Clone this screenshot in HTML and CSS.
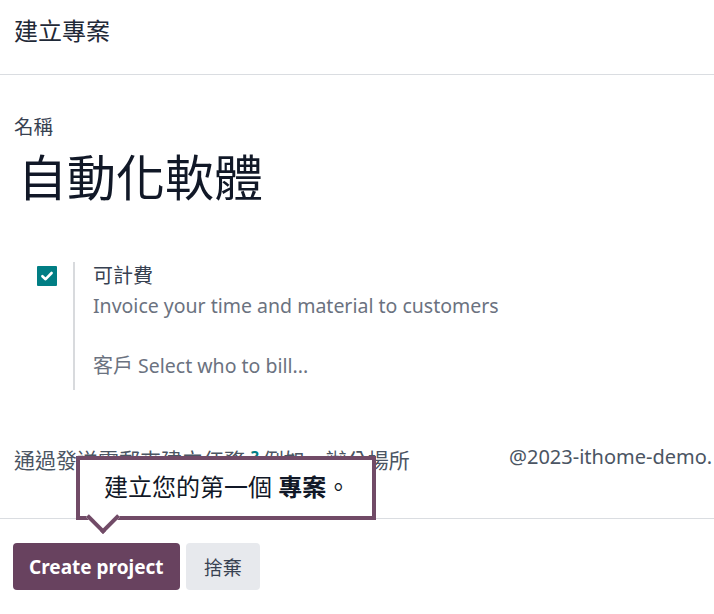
FILE: index.html
```html
<!DOCTYPE html>
<html lang="zh-Hant">
<head>
<meta charset="utf-8">
<title>建立專案</title>
<link rel="stylesheet" href="styles.css">
</head>
<body>
<div class="dialog">
  <header class="dlg-header">
    <h4 class="dlg-title">建立專案</h4>
  </header>
  <main class="dlg-body">
    <label class="name-label">名稱</label>
    <h1 class="name-value">自動化軟體</h1>

    <div class="billable">
      <div class="check-col">
        <span class="checkbox">
          <svg viewBox="0 0 20 20" width="20" height="20" aria-hidden="true"><path d="M5.4 10.2 L8.6 13.2 L14.6 7" fill="none" stroke="#fff" stroke-width="2.6" stroke-linecap="round" stroke-linejoin="round"/></svg>
        </span>
      </div>
      <div class="bill-info">
        <div class="bill-title">可計費</div>
        <div class="bill-desc">Invoice your time and material to customers</div>
        <div class="bill-customer"><span class="cust-label">客戶</span> <span class="cust-placeholder">Select who to bill...</span></div>
      </div>
    </div>

    <div class="alias-row">
      <span class="alias-label">通過發送電郵來建立任務<sup class="help">?</sup>例如，辦公場所</span>
      <span class="alias-domain">@2023-ithome-demo.</span>
    </div>
  </main>
  <footer class="dlg-footer">
    <button class="btn btn-primary">Create project</button>
    <button class="btn btn-secondary">捨棄</button>
  </footer>

  <div class="tip">
    <div class="tip-box">建立您的第一個 <b>專案</b>。</div>
    <div class="tip-arrow"></div>
  </div>
</div>
</body>
</html>
```

FILE: styles.css
```css
html, body {
  margin: 0;
  padding: 0;
  background: #ffffff;
}
body {
  font-family: "Noto Sans", "Noto Sans CJK TC", sans-serif;
  color: #374151;
  width: 714px;
  height: 614px;
  overflow: hidden;
}
.dialog {
  position: relative;
  width: 714px;
  height: 614px;
}
.dlg-header {
  height: 75px;
  box-sizing: border-box;
  border-bottom: 1px solid #dadde1;
  padding: 16px 14px 0;
}
.dlg-title {
  margin: 0;
  font-weight: 400;
  font-size: 24px;
  line-height: 30px;
  color: #1f2937;
}
.dlg-body {
  padding: 39px 14px 0;
  height: 443px;
  box-sizing: border-box;
}
.name-label {
  display: block;
  font-size: 19.5px;
  line-height: 26px;
  color: #374151;
}
.name-value {
  margin: 7px 0 0 4px;
  font-weight: 400;
  font-size: 49px;
  line-height: 60px;
  color: #111827;
}
.billable {
  display: flex;
  margin: 55px 0 0 23px;
}
.check-col {
  width: 36px;
  padding-top: 4px;
}
.checkbox {
  display: block;
  width: 20px;
  height: 20px;
  background: #017e84;
  border-radius: 1px;
}
.checkbox svg { display: block; }
.bill-info {
  border-left: 2px solid #d8dadd;
  padding: 0 0 0 18px;
  height: 128px;
  box-sizing: border-box;
}
.bill-title {
  font-size: 20px;
  line-height: 28px;
  color: #374151;
}
.bill-desc {
  font-size: 19.5px;
  line-height: 28px;
  color: #6b7280;
  margin-top: 2px;
}
.bill-customer {
  margin-top: 32px;
  font-size: 19.5px;
  line-height: 28px;
  color: #6b7280;
}
.cust-label { font-size: 20px; }
.alias-row {
  display: flex;
  margin-top: 53px;
  font-size: 21px;
  line-height: 28px;
  color: #4b5563;
  white-space: nowrap;
}
.alias-label {
  width: 495px;
  flex-shrink: 0;
}
.help {
  color: #017e84;
  font-weight: 700;
  font-size: 16px;
  vertical-align: 5px;
  margin: 0 4px 0 6px;
}
.alias-domain {
  font-size: 20px;
  color: #4b5563;
}
.dlg-footer {
  border-top: 1px solid #dadde1;
  padding: 24px 13px 0;
  display: flex;
  gap: 6px;
}
.btn {
  font-family: "Noto Sans", "Noto Sans CJK TC", sans-serif;
  font-size: 19px;
  height: 47px;
  border: none;
  border-radius: 4px;
  padding: 0 16px;
}
.btn-primary {
  background: #68425f;
  color: #ffffff;
  font-weight: 700;
}
.btn-secondary {
  background: #e7e9ed;
  color: #374151;
  padding: 0 18px;
}
.tip {
  position: absolute;
  left: 76px;
  top: 456px;
}
.tip-box {
  width: 300px;
  height: 64px;
  box-sizing: border-box;
  border: 4px solid #714b67;
  background: #ffffff;
  padding: 0 0 0 24px;
  font-size: 24px;
  line-height: 54px;
  color: #111827;
  white-space: nowrap;
}
.tip-box b { font-weight: 700; }
.tip-arrow {
  position: absolute;
  left: 15px;
  top: 49px;
  width: 20px;
  height: 20px;
  background: #ffffff;
  border-right: 4px solid #714b67;
  border-bottom: 4px solid #714b67;
  transform: rotate(45deg);
}
```
